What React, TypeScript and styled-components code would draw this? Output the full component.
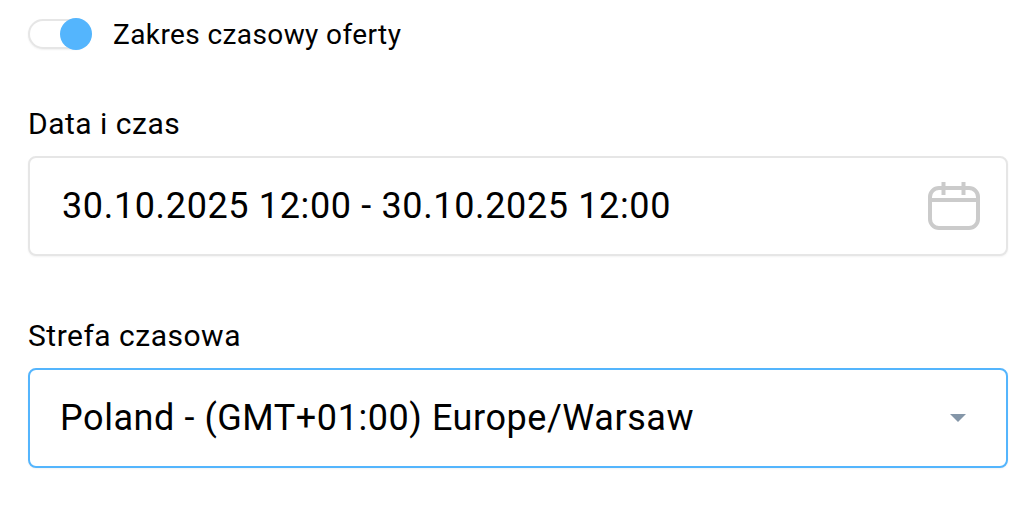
import React from "react";
import styled, { createGlobalStyle } from "styled-components";

const Global = createGlobalStyle`
  html, body {
    margin: 0;
    padding: 0;
    background: #fff;
  }
`;

const Page = styled.div`
  width: 1034px;
  height: 512px;
  box-sizing: border-box;
  padding: 18px 26px 0 28px;
  font-family: Roboto, "Liberation Sans", sans-serif;
  color: #000;
  overflow: hidden;
`;

const SwitchRow = styled.div`
  display: flex;
  align-items: center;
  gap: 21px;
  height: 32px;
`;

const Track = styled.div`
  position: relative;
  width: 64px;
  height: 32px;
  display: flex;
  align-items: center;
`;

const Rail = styled.div`
  width: 62px;
  height: 30px;
  box-sizing: border-box;
  border: 2px solid #e6e6e6;
  border-radius: 15px;
  background: #fff;
  box-shadow: 0 1px 2px rgba(0, 0, 0, 0.06);
`;

const Knob = styled.div`
  position: absolute;
  top: 0;
  right: 0;
  width: 32px;
  height: 32px;
  border-radius: 50%;
  background: #54b5fd;
`;

const SwitchLabel = styled.span`
  font-size: 28px;
  line-height: 32px;
  letter-spacing: 0.4px;
  padding-top: 2px;
`;

const Field = styled.div<{ $top: number }>`
  margin-top: ${({ $top }) => $top}px;
`;

const Label = styled.div`
  font-size: 30px;
  line-height: 32px;
  letter-spacing: 0.5px;
  margin-bottom: 16px;
`;

const Box = styled.div<{ $active?: boolean }>`
  display: flex;
  align-items: center;
  justify-content: space-between;
  width: 980px;
  height: 100px;
  box-sizing: border-box;
  border: 2px solid ${({ $active }) => ($active ? "#54b5fd" : "#e6e6e6")};
  border-radius: 8px;
  background: #fff;
  box-shadow: 0 1px 2px rgba(0, 0, 0, 0.05);
`;

const Value = styled.span<{ $inset: number; $spacing: number }>`
  font-size: 36px;
  line-height: 44px;
  letter-spacing: ${({ $spacing }) => $spacing}px;
  padding-left: ${({ $inset }) => $inset}px;
`;

const CalendarSlot = styled.span`
  display: flex;
  padding-right: 26px;
`;

const Caret = styled.span`
  width: 0;
  height: 0;
  margin-right: 40px;
  border-left: 8px solid transparent;
  border-right: 8px solid transparent;
  border-top: 8px solid #8496a8;
`;

const CalendarIcon = () => (
  <svg width="52" height="48" viewBox="0 0 52 48" fill="none" stroke="#cbcbcb" strokeWidth="4">
    <rect x="2" y="6" width="48" height="40" rx="9" />
    <path d="M2 18H50" />
    <path d="M15.5 0V13M35.5 0V13" />
  </svg>
);

const App = () => (
  <>
    <Global />
    <Page>
      <SwitchRow>
        <Track>
          <Rail />
          <Knob />
        </Track>
        <SwitchLabel>Zakres czasowy oferty</SwitchLabel>
      </SwitchRow>
      <Field $top={58}>
        <Label>Data i czas</Label>
        <Box>
          <Value $inset={32} $spacing={0.64}>30.10.2025 12:00 - 30.10.2025 12:00</Value>
          <CalendarSlot>
            <CalendarIcon />
          </CalendarSlot>
        </Box>
      </Field>
      <Field $top={64}>
        <Label>Strefa czasowa</Label>
        <Box $active>
          <Value $inset={30} $spacing={0.56}>Poland - (GMT+01:00) Europe/Warsaw</Value>
          <Caret />
        </Box>
      </Field>
    </Page>
  </>
);

export default App;
